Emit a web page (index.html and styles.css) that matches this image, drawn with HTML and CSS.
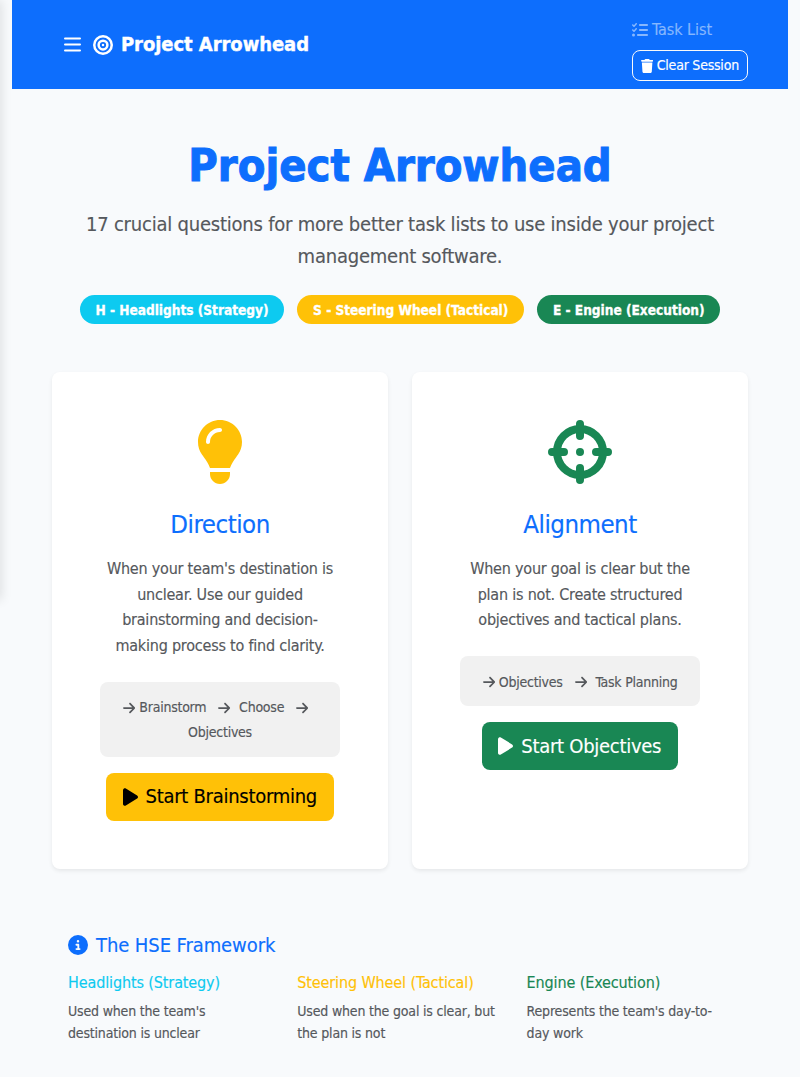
FILE: index.html
```html
<!DOCTYPE html>
<html lang="en">
<head>
<meta charset="utf-8">
<title>Project Arrowhead</title>
<link rel="stylesheet" href="styles.css">
</head>
<body>
<svg class="defs" xmlns="http://www.w3.org/2000/svg">
  <symbol id="arrow" viewBox="0 0 448 512"><path d="M438.6 278.6c12.5-12.5 12.5-32.8 0-45.3l-160-160c-12.5-12.5-32.8-12.5-45.3 0s-12.5 32.8 0 45.3L338.8 224 32 224c-17.7 0-32 14.3-32 32s14.3 32 32 32l306.7 0L233.4 393.4c-12.5 12.5-12.5 32.8 0 45.3s32.8 12.5 45.3 0l160-160z"/></symbol>
  <symbol id="play" viewBox="0 0 384 512"><path d="M73 39c-14.8-9.1-33.4-9.4-48.5-.9S0 62.6 0 80V432c0 17.4 9.4 33.4 24.5 41.9s33.7 8.1 48.5-.9L361 297c14.3-8.7 23-24.2 23-41s-8.7-32.2-23-41L73 39z"/></symbol>
</svg>
<aside class="drawer"></aside>
<header class="topbar">
  <div class="brand">
    <svg class="menu" viewBox="0 0 17 15"><path d="M1 1.5h15M1 7.5h15M1 13.5h15" fill="none" stroke="currentColor" stroke-width="2" stroke-linecap="round"/></svg>
    <svg class="target" viewBox="0 0 512 512"><path fill-rule="evenodd" d="M448 256A192 192 0 1 0 64 256a192 192 0 1 0 384 0zM0 256a256 256 0 1 1 512 0A256 256 0 1 1 0 256zm256 80a80 80 0 1 0 0-160 80 80 0 1 0 0 160zm0-224a144 144 0 1 1 0 288 144 144 0 1 1 0-288zM224 256a32 32 0 1 1 64 0 32 32 0 1 1-64 0z"/></svg>
    <span>Project Arrowhead</span>
  </div>
  <nav class="actions">
    <a class="tasks"><svg viewBox="0 0 512 512"><path d="M152.1 38.2c9.9 8.9 10.7 24 1.8 33.9l-72 80c-4.4 4.9-10.6 7.8-17.2 7.9s-12.9-2.4-17.6-7L7 113C-2.3 103.6-2.3 88.4 7 79s24.6-9.4 33.9 0l22.1 22.1 55.1-61.2c8.9-9.9 24-10.7 33.9-1.8zm0 160c9.9 8.9 10.7 24 1.8 33.9l-72 80c-4.4 4.9-10.6 7.8-17.2 7.9s-12.9-2.4-17.6-7L7 273c-9.4-9.4-9.4-24.6 0-33.9s24.6-9.4 33.9 0l22.1 22.1 55.1-61.2c8.9-9.9 24-10.7 33.9-1.8zM224 96c0-17.7 14.3-32 32-32H480c17.7 0 32 14.3 32 32s-14.3 32-32 32H256c-17.7 0-32-14.3-32-32zm0 160c0-17.7 14.3-32 32-32H480c17.7 0 32 14.3 32 32s-14.3 32-32 32H256c-17.7 0-32-14.3-32-32zM160 416c0-17.7 14.3-32 32-32H480c17.7 0 32 14.3 32 32s-14.3 32-32 32H192c-17.7 0-32-14.3-32-32zM48 368a48 48 0 1 1 0 96 48 48 0 1 1 0-96z"/></svg>Task List</a>
    <button class="clear"><svg viewBox="0 0 448 512"><path d="M135.2 17.7L128 32H32C14.3 32 0 46.3 0 64S14.3 96 32 96H416c17.7 0 32-14.3 32-32s-14.3-32-32-32H320l-7.2-14.3C307.4 6.8 296.3 0 284.2 0H163.8c-12.1 0-23.2 6.8-28.6 17.7zM416 128H32L53.2 467c1.6 25.3 22.6 45 47.9 45H346.9c25.3 0 46.3-19.7 47.9-45L416 128z"/></svg>Clear Session</button>
  </nav>
</header>
<main>
  <section class="hero">
    <h1>Project Arrowhead</h1>
    <p class="lead">17 crucial questions for more better task lists to use inside your project<br>management software.</p>
    <div class="badges">
      <span class="badge cyan">H - Headlights (Strategy)</span>
      <span class="badge yellow">S - Steering Wheel (Tactical)</span>
      <span class="badge green">E - Engine (Execution)</span>
    </div>
  </section>
  <section class="cards">
    <article class="card">
      <svg class="hero-icon gold" viewBox="0 0 384 512"><path fill-rule="evenodd" d="M272 384c9.6-31.9 29.5-59.1 49.2-86.2c5.2-7.1 10.4-14.2 15.4-21.4c19.8-28.5 31.4-63 31.4-100.3C368 78.8 289.2 0 192 0S16 78.8 16 176c0 37.3 11.6 71.9 31.4 100.3c5 7.2 10.2 14.3 15.4 21.4c19.8 27.1 39.7 54.4 49.2 86.2H272zM192 512c44.2 0 80-35.8 80-80V416H112v16c0 44.2 35.8 80 80 80zM112 176c0 8.8-7.2 16-16 16s-16-7.2-16-16c0-61.9 50.1-112 112-112c8.8 0 16 7.2 16 16s-7.2 16-16 16c-44.2 0-80 35.8-80 80z"/></svg>
      <h2>Direction</h2>
      <p>When your team's destination is<br>unclear. Use our guided<br>brainstorming and decision-<br>making process to find clarity.</p>
      <div class="flow">
        <div><svg><use href="#arrow"/></svg><span>Brainstorm</span><svg class="mid"><use href="#arrow"/></svg><span>Choose</span><svg class="mid"><use href="#arrow"/></svg></div>
        <div>Objectives</div>
      </div>
      <button class="start yellow"><svg><use href="#play"/></svg>Start Brainstorming</button>
    </article>
    <article class="card">
      <svg class="hero-icon leaf" viewBox="0 0 512 512"><g fill="none" stroke="currentColor" stroke-width="64" stroke-linecap="round"><circle cx="256" cy="256" r="184"/><path d="M256 32v96M256 384v96M32 256h96M384 256h96"/></g><circle cx="256" cy="256" r="32"/></svg>
      <h2>Alignment</h2>
      <p>When your goal is clear but the<br>plan is not. Create structured<br>objectives and tactical plans.</p>
      <div class="flow">
        <div><svg><use href="#arrow"/></svg><span>Objectives</span><svg class="mid"><use href="#arrow"/></svg><span>Task Planning</span></div>
      </div>
      <button class="start green"><svg><use href="#play"/></svg>Start Objectives</button>
    </article>
  </section>
  <section class="framework">
    <h3><svg viewBox="0 0 512 512"><path d="M256 512A256 256 0 1 0 256 0a256 256 0 1 0 0 512zM216 336h24V272H216c-13.3 0-24-10.7-24-24s10.7-24 24-24h48c13.3 0 24 10.7 24 24v88h8c13.3 0 24 10.7 24 24s-10.7 24-24 24H216c-13.3 0-24-10.7-24-24s10.7-24 24-24zm40-208a32 32 0 1 1 0 64 32 32 0 1 1 0-64z"/></svg>The HSE Framework</h3>
    <div class="columns">
      <div><h4 class="c-cyan">Headlights (Strategy)</h4><p>Used when the team's<br>destination is unclear</p></div>
      <div><h4 class="gold">Steering Wheel (Tactical)</h4><p>Used when the goal is clear, but<br>the plan is not</p></div>
      <div><h4 class="leaf">Engine (Execution)</h4><p>Represents the team's day-to-<br>day work</p></div>
    </div>
  </section>
</main>
</body>
</html>
```
FILE: styles.css
```css
* { box-sizing: border-box; }
body {
  margin: 0;
  height: 1077px;
  overflow: hidden;
  background: #f8fafc;
  color: #55585c;
  font: 16px/25.6px "DejaVu Sans Condensed", "DejaVu Sans", sans-serif;
  font-stretch: condensed;
  -webkit-text-stroke: .15px currentColor;
}
h1, h2, h3, h4, p { margin: 0; font-weight: 400; }
svg { fill: currentColor; flex: none; }
button { font: inherit; white-space: nowrap; }
.defs { position: absolute; width: 0; height: 0; }
.drawer {
  position: absolute;
  left: -280px;
  top: 0;
  width: 280px;
  height: 600px;
  box-shadow: 2px 0 10px rgba(0, 0, 0, .1);
}

.topbar {
  position: relative;
  display: flex;
  justify-content: space-between;
  height: 89px;
  margin: 0 12px;
  padding: 0 40px 0 52px;
  background: #0d6efd;
  color: #fff;
}
.brand {
  display: flex;
  align-items: center;
  font-size: 20px;
  font-weight: 700;
  letter-spacing: -.06px;
  -webkit-text-stroke: .4px currentColor;
}
.brand span { padding-top: 1px; }
.menu { width: 17px; height: 15px; margin-right: 12px; }
.target { width: 20px; height: 20px; margin-right: 8px; }
.actions { width: 116px; padding-top: 17px; }
.tasks { display: flex; align-items: center; height: 25px; color: #86b7fe; letter-spacing: -.05px; }
.tasks svg { width: 16px; height: 16px; margin-right: 4px; }
.clear {
  display: flex;
  align-items: center;
  width: 116px;
  height: 31px;
  margin-top: 8px;
  padding: 0 0 0 8px;
  border: 1px solid #f8f9fa;
  border-radius: 8px;
  background: none;
  color: #fff;
  font-size: 14px;
  letter-spacing: -.22px;
}
.clear svg { width: 12.25px; height: 14px; margin-right: 3.5px; }

main { padding: 48px 52px 0; }
.hero { text-align: center; }
h1 {
  margin-top: 2px;
  color: #0d6efd;
  font-size: 44.8px;
  font-weight: 700;
  line-height: 54px;
  -webkit-text-stroke: 1px currentColor;
}
.lead { margin-top: 15px; font-size: 20px; line-height: 32px; letter-spacing: -.22px; white-space: nowrap; }
.badges { display: flex; justify-content: center; gap: 13px; margin-top: 23px; }
.badge {
  height: 29px;
  padding: 0 15.8px;
  border-radius: 15px;
  color: #fff;
  font-size: 13.6px;
  font-weight: 700;
  line-height: 30px;
  letter-spacing: -.02px;
  white-space: nowrap;
  -webkit-text-stroke: .3px currentColor;
}
.cyan { background: #0dcaf0; }
.yellow { background: #ffc107; }
.green { background: #198754; }
.gold { color: #ffc107; }
.leaf { color: #198754; }
.c-cyan { color: #0dcaf0; }

.cards { display: grid; grid-template-columns: 1fr 1fr; gap: 24px; height: 497px; margin-top: 48px; }
.card {
  display: flex;
  flex-direction: column;
  align-items: center;
  padding: 48px;
  border-radius: 8px;
  background: #fff;
  box-shadow: 0 2px 4px rgba(0, 0, 0, .075);
  text-align: center;
}
.hero-icon { height: 64px; width: 64px; }
h2 { margin-top: 25px; color: #0d6efd; font-size: 25.6px; line-height: 31px; letter-spacing: -.5px; }
.card p { margin-top: 16px; letter-spacing: -.22px; white-space: nowrap; }
.flow {
  width: 240px;
  margin-top: 23.6px;
  padding: 13.2px 0 11.6px;
  border-radius: 8px;
  background: #f1f1f1;
  font-size: 14px;
  line-height: 25.2px;
  letter-spacing: -.24px;
}
.flow div { display: flex; align-items: center; justify-content: center; }
.flow svg { width: 12.25px; height: 14px; margin-right: 4px; }
.flow .mid { margin: 0 8.5px 0 12px; }
.start {
  display: flex;
  align-items: center;
  height: 48px;
  margin-top: 16px;
  padding: 0 17px 0 16.5px;
  border: 0;
  border-radius: 8px;
  color: #000;
  font-size: 20px;
  letter-spacing: -.28px;
}
.start.green { color: #fff; }
.start svg { width: 15px; height: 20px; margin-right: 8px; }

.framework { padding: 64px 16px 0; }
h3 { display: flex; align-items: center; color: #0d6efd; font-size: 20px; line-height: 24px; letter-spacing: -.08px; }
h3 svg { width: 20px; height: 20px; margin-right: 8px; }
.columns { display: grid; grid-template-columns: repeat(3, 229.3px); margin-top: 16px; white-space: nowrap; }
h4 { font-size: 16px; line-height: 19px; letter-spacing: -.12px; }
.columns p { margin-top: 8px; font-size: 14px; line-height: 22.4px; letter-spacing: -.18px; }
```
